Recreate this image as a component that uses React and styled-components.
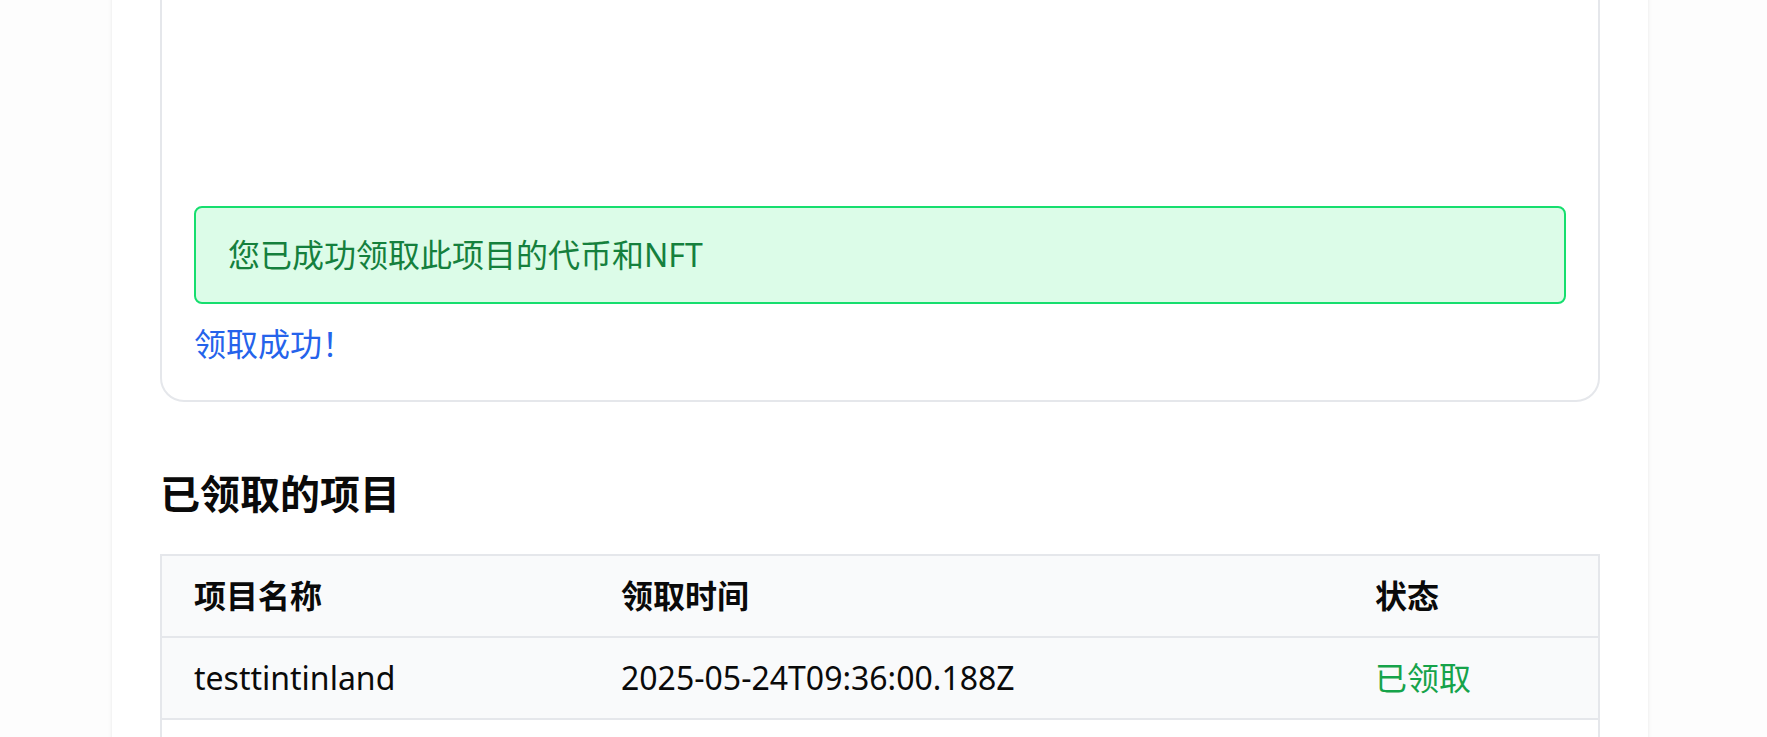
import styled, { createGlobalStyle } from "styled-components";

const GlobalStyle = createGlobalStyle`
  html, body {
    margin: 0;
    padding: 0;
    background: #fdfdfd;
    overflow: hidden;
  }
  body {
    padding-right: 7px;
    font-family: "Noto Sans", "Noto Sans CJK SC", sans-serif;
    color: #0a0a0a;
  }
`;

const Container = styled.div`
  max-width: 1536px;
  margin: -132px auto 0;
  padding: 48px;
  box-sizing: border-box;
  background: #fff;
  box-shadow: 0 0 2px rgba(0, 0, 0, 0.06), 0 0 6px rgba(0, 0, 0, 0.05);
  min-height: 1000px;
`;

const Card = styled.div`
  border: 2px solid #e5e7eb;
  border-radius: 24px;
  padding: 32px;
  display: flex;
  flex-direction: column;
`;

const Preview = styled.div`
  height: 240px;
`;

const Alert = styled.div`
  margin-top: 16px;
  padding: 24px 32px;
  border: 2px solid #16de6e;
  border-radius: 8px;
  background: #dcfce8;
  color: #15803d;
  font-size: 32px;
  line-height: 46px;
`;

const Message = styled.p`
  margin: 16px 0 0;
  font-size: 32px;
  line-height: 48px;
  color: #2563eb;
`;

const Heading = styled.h2`
  margin: 64px 0 32px;
  font-size: 40px;
  line-height: 56px;
  font-weight: 700;
`;

const Table = styled.table`
  width: 100%;
  border-collapse: collapse;
  border: 2px solid #e5e7eb;
  table-layout: fixed;
`;

const Row = styled.tr`
  background: ${(p) => (p.$shade ? "#f9fafb" : "#fff")};
  border-bottom: 2px solid #e5e7eb;
`;

const Th = styled.th`
  text-align: left;
  padding: 16px 32px;
  font-size: 32px;
  line-height: 48px;
  font-weight: 700;
`;

const Td = styled.td`
  padding: 16px 32px;
  font-size: 32px;
  line-height: 48px;
  color: ${(p) => p.$color || "#0a0a0a"};
`;

const claims = [
  { name: "testtintinland", time: "2025-05-24T09:36:00.188Z", status: "已领取" },
];

export default function App() {
  return (
    <>
      <GlobalStyle />
      <Container>
        <Card>
          <Preview />
          <Alert>您已成功领取此项目的代币和NFT</Alert>
          <Message>领取成功！</Message>
        </Card>
        <Heading>已领取的项目</Heading>
        <Table>
          <colgroup>
            <col style={{ width: "428px" }} />
            <col style={{ width: "754px" }} />
            <col />
          </colgroup>
          <thead>
            <Row $shade>
              <Th>项目名称</Th>
              <Th>领取时间</Th>
              <Th>状态</Th>
            </Row>
          </thead>
          <tbody>
            {claims.map((c, i) => (
              <Row key={i} $shade={i % 2 === 0}>
                <Td>{c.name}</Td>
                <Td>{c.time}</Td>
                <Td $color="#16a34a">{c.status}</Td>
              </Row>
            ))}
            <Row>
              <Td />
              <Td />
              <Td />
            </Row>
          </tbody>
        </Table>
      </Container>
    </>
  );
}
